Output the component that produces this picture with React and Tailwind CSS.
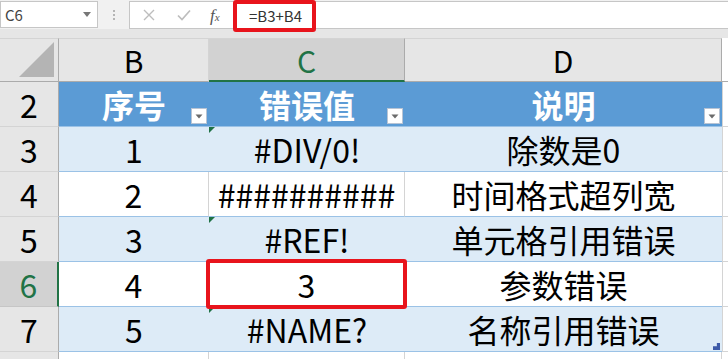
import React from "react";

const FONT = { fontFamily: '"Noto Sans CJK SC", "Noto Sans", sans-serif' };

const rows = [
  { n: 3, b: "1", c: "#DIV/0!", d: "除数是0", tint: true, err: true },
  { n: 4, b: "2", c: "##########", d: "时间格式超列宽" },
  { n: 5, b: "3", c: "#REF!", d: "单元格引用错误", tint: true, err: true },
  { n: 6, b: "4", c: "3", d: "参数错误", sel: true },
  { n: 7, b: "5", c: "#NAME?", d: "名称引用错误", tint: true, err: true },
];

function FilterButton() {
  return (
    <div className="absolute right-[2px] bottom-[2px] w-[16px] h-[16px] bg-white border border-[#b8c4d4] flex items-center justify-center">
      <svg width="8" height="5" viewBox="0 0 8 5">
        <path d="M0.5 0.5 L7.5 0.5 L4 4.5 Z" fill="#6b6b6b" />
      </svg>
    </div>
  );
}

function ErrorMark() {
  return (
    <svg className="absolute left-0 top-0" width="6" height="6" viewBox="0 0 6 6">
      <path d="M0 0 L6 0 L0 6 Z" fill="#1e7145" />
    </svg>
  );
}

function FormulaBar() {
  return (
    <div className="h-[29px] flex items-start bg-[#f1f1f1] pt-[1px]">
      {/* name box */}
      <div className="w-[98px] h-[27px] bg-white border border-[#c6c6c6] flex items-center justify-between pl-[4px] pr-[6px]">
        <span className="text-[15px] text-[#444] leading-none">C6</span>
        <svg width="8" height="5" viewBox="0 0 8 5">
          <path d="M0 0 L8 0 L4 5 Z" fill="#777" />
        </svg>
      </div>
      {/* grip dots */}
      <div className="w-[31px] h-[27px] flex flex-col items-center justify-center gap-[2px]">
        <div className="w-[2px] h-[2px] bg-[#b5b5b5]" />
        <div className="w-[2px] h-[2px] bg-[#b5b5b5]" />
        <div className="w-[2px] h-[2px] bg-[#b5b5b5]" />
      </div>
      {/* formula area */}
      <div className="flex-1 h-[28px] bg-white border border-[#c6c6c6] border-r-0 flex items-center">
        <div className="w-[107px] flex items-center h-full">
          <svg className="ml-[13px]" width="12" height="12" viewBox="0 0 12 12">
            <path d="M1 1 L11 11 M11 1 L1 11" stroke="#bdbdbd" strokeWidth="1.4" />
          </svg>
          <svg className="ml-[22px]" width="14" height="12" viewBox="0 0 14 12">
            <path d="M1 6.5 L5 10.5 L13 1.5" stroke="#bdbdbd" strokeWidth="1.7" fill="none" />
          </svg>
          <span
            className="ml-[19px] text-[17px] italic text-[#555] leading-none"
            style={{ fontFamily: '"Liberation Serif", serif' }}
          >
            f<span className="text-[11px]">x</span>
          </span>
        </div>
        <div className="relative h-full flex items-center">
          <div className="absolute left-[-4px] top-[-2px] w-[83px] h-[32px] border-[4px] border-[#e8141c] rounded-[3px]" />
          <span className="ml-[12px] text-[15px] text-[#333] leading-none">=B3+B4</span>
        </div>
      </div>
    </div>
  );
}

export default function App() {
  const rowHead = (n, sel) =>
    sel
      ? "bg-[#d2d2d2] text-[#217346] border-r-2 border-r-[#217346] border-b border-b-[#c6c6c6]"
      : "bg-[#e6e6e6] text-black border-r border-r-[#ababab] border-b border-b-[#d4d4d4]";

  return (
    <div className="w-[728px] h-[359px] overflow-hidden bg-[#e6e6e6]" style={FONT}>
      <FormulaBar />
      <div className="h-[9px] bg-[#e6e6e6]" />
      <div className="grid grid-cols-[59px_150px_196px_317px_6px] grid-rows-[44px_repeat(6,45px)_8px]">
        {/* column headers */}
        <div className="relative bg-[#e6e6e6] border-r border-r-[#ababab] border-b border-b-[#ababab] border-t border-t-[#d4d4d4]">
          <svg className="absolute right-[4px] bottom-[4px]" width="35" height="35" viewBox="0 0 35 35">
            <path d="M35 0 L35 35 L0 35 Z" fill="#b4b4b4" />
          </svg>
        </div>
        <div className="bg-[#e6e6e6] border-r border-r-[#d4d4d4] border-b border-b-[#ababab] border-t border-t-[#d4d4d4] flex items-center justify-center text-[30px] leading-none text-black">
          B
        </div>
        <div className="bg-[#d2d2d2] border-r border-r-[#ababab] border-b-2 border-b-[#217346] border-t border-t-[#d4d4d4] flex items-center justify-center text-[30px] leading-none text-[#217346]">
          C
        </div>
        <div className="bg-[#e6e6e6] border-r border-r-[#ababab] border-b border-b-[#ababab] border-t border-t-[#d4d4d4] flex items-center justify-center text-[30px] leading-none text-black">
          D
        </div>
        <div className="bg-white border-b border-b-[#ababab]" />

        {/* table header row */}
        <div className={`flex items-center justify-center text-[32px] leading-none ${rowHead(2)}`}>2</div>
        <div className="relative bg-[#5b9bd5] border-b border-b-[#9bc2e6] flex items-center justify-center text-[32px] font-bold text-white leading-none">
          序号
          <FilterButton />
        </div>
        <div className="relative bg-[#5b9bd5] border-b border-b-[#9bc2e6] flex items-center justify-center text-[32px] font-bold text-white leading-none">
          错误值
          <FilterButton />
        </div>
        <div className="relative bg-[#5b9bd5] border-b border-b-[#9bc2e6] flex items-center justify-center text-[32px] font-bold text-white leading-none">
          说明
          <FilterButton />
        </div>
        <div className="bg-white border-l border-l-[#d4d4d4] border-b border-b-[#d4d4d4]" />

        {rows.map((r) => {
          const bg = r.tint ? "bg-[#ddebf7]" : "bg-white";
          const sep = r.tint ? "" : "border-r border-r-[#d4d4d4]";
          const last = r.n === 7;
          return (
            <React.Fragment key={r.n}>
              <div className={`flex items-center justify-center text-[32px] leading-none ${rowHead(r.n, r.sel)}`}>
                {r.n}
              </div>
              <div className={`${bg} ${sep} border-b border-b-[#9bc2e6] flex items-center justify-center text-[32px] leading-none text-black`}>
                {r.b}
              </div>
              <div className={`relative ${r.sel ? "z-10" : ""} ${bg} ${sep} border-b border-b-[#9bc2e6] flex items-center justify-center text-[32px] leading-none text-black whitespace-nowrap`}>
                {r.err && <ErrorMark />}
                {r.c}
                {r.sel && (
                  <div className="absolute left-[-3px] right-[-3px] top-[-3px] bottom-[-3px] border-[4px] border-[#e8141c] rounded-[3px]" />
                )}
              </div>
              <div className={`relative ${bg} border-b border-b-[#9bc2e6] flex items-center justify-center text-[32px] leading-none text-black whitespace-nowrap`}>
                {r.d}
                {last && <div className="absolute right-[2px] bottom-[1px] w-[7px] h-[7px] bg-[#3d5aa8]" style={{ clipPath: "polygon(100% 0, 100% 100%, 0 100%, 0 45%, 55% 45%, 55% 0)" }} />}
              </div>
              <div className="bg-white border-l border-l-[#d4d4d4] border-b border-b-[#d4d4d4]" />
            </React.Fragment>
          );
        })}

        {/* partial row 8 */}
        <div className="bg-[#e6e6e6] border-r border-r-[#ababab]" />
        <div className="bg-white border-r border-r-[#d4d4d4]" />
        <div className="bg-white border-r border-r-[#d4d4d4]" />
        <div className="bg-white border-r border-r-[#d4d4d4]" />
        <div className="bg-white" />
      </div>
    </div>
  );
}
